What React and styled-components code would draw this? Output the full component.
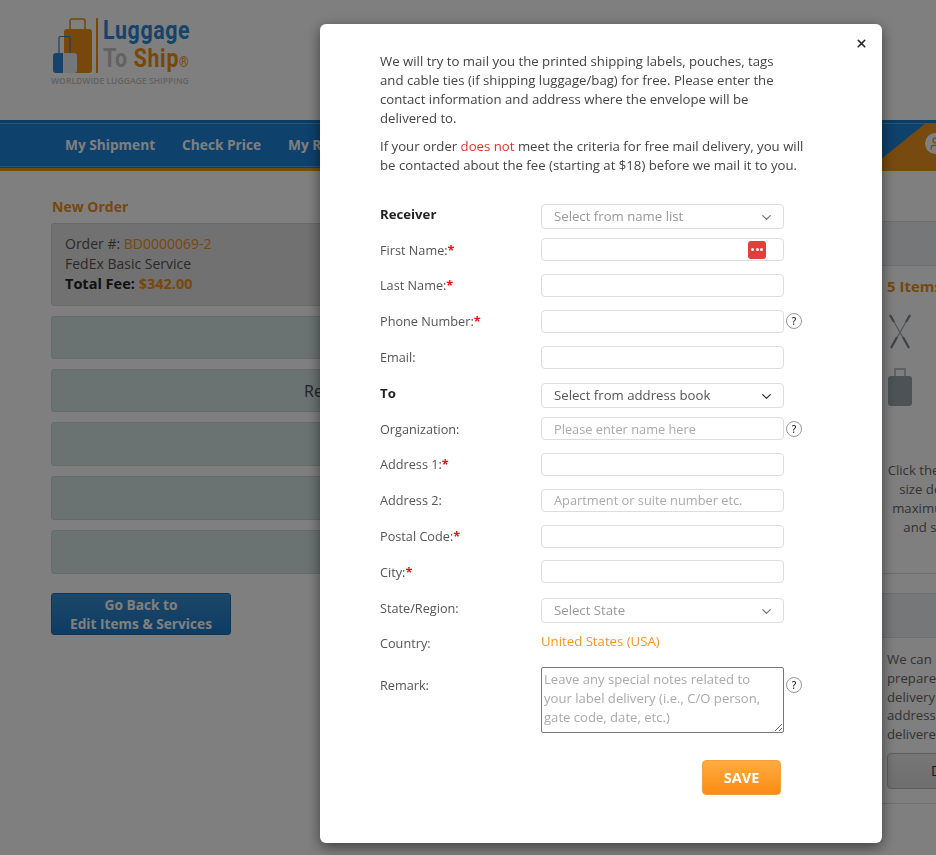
import React from "react";
import styled, { createGlobalStyle } from "styled-components";
import { ChevronDown, User, X } from "lucide-react";

const Global = createGlobalStyle`
	html, body {
		margin: 0;
		height: 100%;
		overflow: hidden;
		background: #fff;
		font-family: "Open Sans", "Liberation Sans", sans-serif;
		font-size: 14px;
		color: #444;
	}
	* {
		box-sizing: border-box;
	}
`;

const Page = styled.div`
	width: 936px;
	height: 855px;
	overflow: hidden;
`;

const Header = styled.header`
	height: 120px;
	padding: 18px 0 0 51px;
`;

const LogoTop = styled.div`
	display: flex;
	align-items: flex-start;
	height: 56px;
`;

const LogoDivider = styled.div`
	width: 2px;
	height: 55px;
	margin: 0 5px 0 3px;
	background: #ee9012;
`;

const LogoWords = styled.div`
	margin-top: -2px;
	font-family: "Roboto", sans-serif;
	font-weight: 700;
	font-size: 26px;
	line-height: 28px;
	letter-spacing: 0.8px;
	white-space: nowrap;
	transform: scaleX(0.82);
	transform-origin: left top;
`;

const LogoBlue = styled.div`
	color: #2a86d4;
`;

const LogoGrey = styled.span`
	color: #c4c4c4;
`;

const LogoOrange = styled.span`
	color: #ee9012;
`;

const LogoMark = styled.span`
	font-size: 15px;
	font-weight: 400;
	color: #ee9012;
`;

const Tagline = styled.div`
	margin-top: 2px;
	font-size: 8.6px;
	line-height: 11px;
	font-weight: 600;
	color: #c4c4c4;
	white-space: nowrap;
`;

const Nav = styled.nav`
	position: relative;
	height: 51px;
	padding: 0 0 3px 65px;
	display: flex;
	align-items: center;
	gap: 27px;
	background: #1c82d8;
	border-top: 3px solid #1a78c8;
	border-bottom: 3px solid #f0951e;
	box-shadow: inset 0 1px 0 #58a4e4, inset 0 -1px 0 #1c82d8, inset 0 -2px 0 #58a4e4;
	overflow: hidden;
`;

const NavLink = styled.a`
	color: #fff;
	font-size: 13.7px;
	font-weight: 700;
	white-space: nowrap;
`;

const Account = styled.div`
	position: absolute;
	top: 0;
	right: 0;
	bottom: 0;
	width: 66px;
	background: #f0951e;
	clip-path: polygon(56px 0, 100% 0, 100% 100%, 0 100%);
`;

const AccountBadge = styled.div`
	position: absolute;
	top: 10px;
	left: 55px;
	width: 21px;
	height: 21px;
	display: flex;
	align-items: center;
	justify-content: center;
	border-radius: 50%;
	background: #fff;
	color: #f0951e;
`;

const Main = styled.main`
	width: 1140px;
	padding-left: 51px;
	display: grid;
	grid-template-columns: 814px 240px;
	gap: 12px;
`;

const LeftColumn = styled.section`
	padding-top: 27px;
`;

const Title = styled.h2`
	margin: 0 0 8px 1px;
	font-size: 14px;
	line-height: 17px;
	font-weight: 700;
	color: #ef8f1a;
`;

const OrderBox = styled.div`
	height: 83px;
	padding: 10px 13px;
	margin-bottom: 10px;
	background: #e2e2e2;
	border: 1px solid #d2d2d2;
	border-radius: 3px;
	line-height: 20px;
	color: #555;
`;

const Orange = styled.span`
	color: #ef8f1a;
`;

const Strong = styled.div`
	font-size: 14.5px;
	font-weight: 700;
	color: #222;
`;

const Step = styled.div`
	height: ${(p) => p.$h}px;
	margin-bottom: 10px;
	display: flex;
	align-items: center;
	justify-content: center;
	background: #d6e4e4;
	border: 1px solid #c8d6d6;
	border-radius: 3px;
	font-size: 16px;
	color: #444;
`;

const BackButton = styled.button`
	display: block;
	width: 180px;
	height: 42px;
	margin-top: 19px;
	padding: 0;
	border: 1px solid #1a6cae;
	border-radius: 3px;
	background: linear-gradient(#3a8fd0, #1a78c8);
	color: #fff;
	font: 700 13.7px/19px "Open Sans", sans-serif;
`;

const RightColumn = styled.aside`
	padding-top: 50px;
`;

const PanelBar = styled.div`
	height: ${(p) => p.$h}px;
	background: #eceef0;
	border-top: 1px solid #dcdcdc;
	border-bottom: 1px solid #dcdcdc;
`;

const ItemsTitle = styled.div`
	margin: 10px 0 18px 10px;
	font-size: 15px;
	line-height: 20px;
	font-weight: 700;
	white-space: nowrap;
	color: #ef8f1a;
`;

const ItemIcon = styled.svg`
	display: block;
	margin: 0 0 ${(p) => p.$after}px 10px;
`;

const CenterNote = styled.p`
	width: 232px;
	height: 113px;
	margin: 54px 0 0;
	font-size: 13.2px;
	line-height: 19px;
	text-align: center;
	white-space: nowrap;
	color: #666;
	border-bottom: 1px solid #ddd;
`;

const Gap = styled.div`
	height: 19px;
`;

const PanelText = styled.p`
	margin: 12px 0 0 10px;
	font-size: 13.2px;
	line-height: 18.8px;
	white-space: nowrap;
	color: #666;
`;

const GreyButton = styled.button`
	display: block;
	width: 220px;
	height: 36px;
	margin: 9px 0 14px 10px;
	padding: 0 0 0 43px;
	text-align: left;
	border: 1px solid #bbb;
	border-radius: 4px;
	background: linear-gradient(#eee, #ddd);
	font: 14px "Open Sans", sans-serif;
	color: #333;
`;

const Rule = styled.div`
	border-top: 1px solid #ddd;
`;

const Backdrop = styled.div`
	position: fixed;
	inset: 0;
	background: rgba(0, 0, 0, 0.5);
`;

const Modal = styled.div`
	position: fixed;
	top: 24px;
	left: 320px;
	width: 562px;
	height: 819px;
	padding: 28px 60px 0;
	background: #fff;
	border-radius: 6px;
	box-shadow: 0 4px 14px rgba(0, 0, 0, 0.5);
`;

const Close = styled.button`
	position: absolute;
	top: 13px;
	right: 14px;
	width: 13px;
	height: 13px;
	padding: 0;
	border: 0;
	background: none;
	color: #222;
	display: flex;
	align-items: center;
	justify-content: center;
`;

const Intro = styled.p`
	width: ${(p) => p.$w}px;
	margin: 0 0 9px;
	font-size: 13.2px;
	line-height: 19px;
	color: #444;
`;

const Red = styled.span`
	color: #d9382c;
`;

const Form = styled.form`
	margin-top: 21px;
`;

const Row = styled.div`
	position: relative;
	display: flex;
	align-items: ${(p) => (p.$top ? "flex-start" : "center")};
	height: ${(p) => (p.$top ? "auto" : "35.8px")};
`;

const Label = styled.label`
	width: 161px;
	flex-shrink: 0;
	font-size: ${(p) => (p.$bold ? "13.2px" : "12.7px")};
	line-height: 18px;
	font-weight: ${(p) => (p.$bold ? 700 : 400)};
	color: ${(p) => (p.$bold ? "#222" : "#555")};
	margin-top: ${(p) => (p.$top ? "15px" : "0")};
`;

const Star = styled.span`
	color: #f01010;
	font-weight: 700;
`;

const TextInput = styled.input`
	display: block;
	width: 243px;
	height: 23px;
	padding: 0 12px;
	border: 1px solid #ddd;
	border-radius: 4px;
	background: #fff;
	outline: none;
	font: 12.8px "Open Sans", sans-serif;
	color: #444;

	&::placeholder {
		color: #aaa;
		opacity: 1;
	}
`;

const SelectBox = styled.div`
	width: 243px;
	height: 25px;
	margin-top: 5px;
	padding: 0 12px;
	display: flex;
	align-items: center;
	justify-content: space-between;
	border: 1px solid #ddd;
	border-radius: 4px;
	background: #fff;
	font-size: 13.2px;
	color: ${(p) => (p.$dark ? "#555" : "#999")};
`;

const Chevron = styled(ChevronDown)`
	color: ${(p) => (p.$dark ? "#333" : "#777")};
	margin-right: -3px;
	margin-top: 2px;
`;

const Help = styled.span`
	width: 16px;
	height: 16px;
	margin-left: 2px;
	display: flex;
	align-items: center;
	justify-content: center;
	flex-shrink: 0;
	border: 1px solid #999;
	border-radius: 50%;
	font-size: 10px;
	font-weight: 600;
	color: #333;
	margin-top: ${(p) => (p.$top ? "16px" : "0")};
`;

const KeyBadge = styled.span`
	position: absolute;
	left: 368px;
	top: 9px;
	width: 18px;
	height: 18px;
	display: flex;
	align-items: center;
	justify-content: center;
	gap: 1.5px;
	border-radius: 3px;
	background: #e0403a;
`;

const Dot = styled.i`
	width: 3px;
	height: 3px;
	border-radius: 50%;
	background: #fff;
`;

const Country = styled.div`
	margin-top: -5px;
	font-size: 13.2px;
	color: #f7941d;
`;

const Notes = styled.textarea`
	display: block;
	width: 243px;
	height: 66px;
	margin-top: 6px;
	padding: 2px;
	border: 1px solid #777;
	border-radius: 2px;
	outline: none;
	font: 13.1px/19px "Open Sans", sans-serif;

	&::placeholder {
		color: #aaa;
		opacity: 1;
	}
`;

const Actions = styled.div`
	display: flex;
	justify-content: flex-end;
	width: 401px;
	margin-top: 27px;
`;

const SaveButton = styled.button`
	width: 79px;
	height: 35px;
	padding: 0;
	border: 1px solid #f0a040;
	border-radius: 4px;
	background: linear-gradient(#ffab40, #fb8c12);
	color: #fff;
	font: 700 14.5px "Open Sans", sans-serif;
`;

const LogoIcon = () => (
	<svg width="42" height="56" viewBox="0 0 42 56" style={{ display: "block", flexShrink: 0 }}>
		<path d="M19 11V3a2 2 0 0 1 2-2h11a2 2 0 0 1 2 2v8" fill="none" stroke="#ee9012" strokeWidth="1.6" />
		<rect x="13" y="11" width="28" height="44" rx="3" fill="#ee9012" />
		<path d="M8 36V20a1.5 1.5 0 0 1 1.5-1.5h8a1.5 1.5 0 0 1 1.5 1.5v16" fill="none" stroke="#2a86d4" strokeWidth="1.2" />
		<path d="M12 35H5a3 3 0 0 0-3 3v14a3 3 0 0 0 3 3h7z" fill="#2a86d4" />
		<path d="M12 35h11a3 3 0 0 1 3 3v14a3 3 0 0 1-3 3H12z" fill="#e8eef4" />
	</svg>
);

const Poles = () => (
	<ItemIcon $after={19} width="26" height="35" viewBox="0 0 26 35">
		<path d="M3 1l19 33M23 1L4 34" stroke="#a4b0ba" strokeWidth="1.4" />
		<path d="M3 1l4 7M23 1l-4 7M10 23l-6 11M16 23l6 11" stroke="#7a8894" strokeWidth="2.2" />
	</ItemIcon>
);

const Suitcase = () => (
	<ItemIcon $after={0} width="26" height="39" viewBox="0 0 26 39">
		<path d="M8 8V1h10v7" fill="none" stroke="#a8b0b6" strokeWidth="1.4" />
		<rect x="1" y="8" width="24" height="30" rx="3" fill="#9aa4ac" />
	</ItemIcon>
);

const Field = ({ label, required, placeholder, help, badge }) => (
	<Row>
		<Label>
			{label}
			{required && <Star>*</Star>}
		</Label>
		<TextInput placeholder={placeholder} />
		{help && <Help>?</Help>}
		{badge && (
			<KeyBadge>
				<Dot />
				<Dot />
				<Dot />
			</KeyBadge>
		)}
	</Row>
);

const Select = ({ label, bold, dark, text }) => (
	<Row>
		<Label $bold={bold}>{label}</Label>
		<SelectBox $dark={dark}>
			{text}
			<Chevron $dark={dark} size={15} />
		</SelectBox>
	</Row>
);

const App = () => {
	return (
		<Page>
			<Global />
			<Header>
				<LogoTop>
					<LogoIcon />
					<LogoDivider />
					<LogoWords>
						<LogoBlue>Luggage</LogoBlue>
						<LogoGrey>To </LogoGrey>
						<LogoOrange>Ship</LogoOrange>
						<LogoMark>®</LogoMark>
					</LogoWords>
				</LogoTop>
				<Tagline>WORLDWIDE LUGGAGE SHIPPING</Tagline>
			</Header>
			<Nav>
				<NavLink>My Shipment</NavLink>
				<NavLink>Check Price</NavLink>
				<NavLink>My Rewards</NavLink>
				<Account>
					<AccountBadge>
						<User size={15} />
					</AccountBadge>
				</Account>
			</Nav>
			<Main>
				<LeftColumn>
					<Title>New Order</Title>
					<OrderBox>
						Order #: <Orange>BD0000069-2</Orange>
						<br />
						FedEx Basic Service
						<Strong>
							Total Fee: <Orange>$342.00</Orange>
						</Strong>
					</OrderBox>
					<Step $h={43} />
					<Step $h={43}>Receiver and Delivery Information Details</Step>
					<Step $h={44} />
					<Step $h={44} />
					<Step $h={44} />
					<BackButton>
						Go Back to
						<br />
						Edit Items &amp; Services
					</BackButton>
				</LeftColumn>
				<RightColumn>
					<PanelBar $h={45} />
					<ItemsTitle>5 Items</ItemsTitle>
					<Poles />
					<Suitcase />
					<CenterNote>
						Click the image to view the details.
						<br />
						size details for the item and its
						<br />
						maximum weight and dimension
						<br />
						and shipping cost for a piece.
					</CenterNote>
					<Gap />
					<PanelBar $h={45} />
					<PanelText>
						We can mail the printed labels
						<br />
						prepared for you with free
						<br />
						delivery to the contact
						<br />
						address so they can be
						<br />
						delivered to you in time
					</PanelText>
					<GreyButton>Details</GreyButton>
					<Rule />
				</RightColumn>
			</Main>
			<Backdrop />
			<Modal>
				<Close aria-label="Close">
					<X size={13} strokeWidth={3} />
				</Close>
				<Intro $w={415}>
					We will try to mail you the printed shipping labels, pouches, tags and cable ties (if shipping luggage/bag) for free. Please enter the contact information and address where the envelope will be delivered to.
				</Intro>
				<Intro $w={424}>
					If your order <Red>does not</Red> meet the criteria for free mail delivery, you will be contacted about the fee (starting at $18) before we mail it to you.
				</Intro>
				<Form>
					<Select label="Receiver" bold text="Select from name list" />
					<Field label="First Name:" required badge />
					<Field label="Last Name:" required />
					<Field label="Phone Number:" required help />
					<Field label="Email:" />
					<Select label="To" bold dark text="Select from address book" />
					<Field label="Organization:" placeholder="Please enter name here" help />
					<Field label="Address 1:" required />
					<Field label="Address 2:" placeholder="Apartment or suite number etc." />
					<Field label="Postal Code:" required />
					<Field label="City:" required />
					<Select label="State/Region:" text="Select State" />
					<Row>
						<Label>Country:</Label>
						<Country>United States (USA)</Country>
					</Row>
					<Row $top>
						<Label $top>Remark:</Label>
						<Notes placeholder="Leave any special notes related to your label delivery (i.e., C/O person, gate code, date, etc.)" />
						<Help $top>?</Help>
					</Row>
					<Actions>
						<SaveButton>SAVE</SaveButton>
					</Actions>
				</Form>
			</Modal>
		</Page>
	);
};

export default App;
